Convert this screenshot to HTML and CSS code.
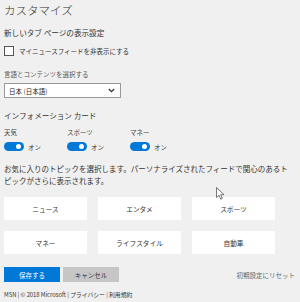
FILE: index.html
```html
<!DOCTYPE html>
<html lang="ja">
<head>
  <meta charset="UTF-8">
  <meta name="viewport" content="width=device-width, initial-scale=1.0">
  <title>カスタマイズ</title>
  <link rel="stylesheet" href="styles.css">
</head>
<body>
  <h1>カスタマイズ</h1>

  <h2 class="section-title">新しいタブ ページの表示設定</h2>
  <label class="check-row">
    <span class="checkbox"></span>
    <span>マイニュースフィードを非表示にする</span>
  </label>

  <div class="field-label">言語とコンテンツを選択する</div>
  <div class="select">
    <span>日本 (日本語)</span>
    <svg class="chevron" width="7" height="5" viewBox="0 0 7 5">
      <path d="M0.8 1 L3.5 3.6 L6.2 1" fill="none" stroke="#333" stroke-width="1.3"/>
    </svg>
  </div>

  <h2 class="section-title info-title">インフォメーション カード</h2>
  <div class="cards">
    <div class="card">
      <div class="card-name">天気</div>
      <div class="toggle-row"><span class="toggle"></span><span>オン</span></div>
    </div>
    <div class="card">
      <div class="card-name">スポーツ</div>
      <div class="toggle-row"><span class="toggle"></span><span>オン</span></div>
    </div>
    <div class="card">
      <div class="card-name">マネー</div>
      <div class="toggle-row"><span class="toggle"></span><span>オン</span></div>
    </div>
  </div>

  <p class="intro">お気に入りのトピックを選択します。パーソナライズされたフィードで関心のあるト<br>ピックがさらに表示されます。</p>

  <div class="topics">
    <button class="topic">ニュース</button>
    <button class="topic">エンタメ</button>
    <button class="topic">スポーツ</button>
    <button class="topic">マネー</button>
    <button class="topic">ライフスタイル</button>
    <button class="topic">自動車</button>
  </div>

  <div class="actions">
    <button class="btn btn-save">保存する</button>
    <button class="btn btn-cancel">キャンセル</button>
    <a class="reset" href="#">初期設定にリセット</a>
  </div>

  <div class="footer">MSN | © 2018 Microsoft | プライバシー | 利用規約</div>

  <!-- mouse pointer in the screenshot -->
  <svg class="cursor" width="9" height="13" viewBox="0 0 9 13">
    <path d="M0.5 0.5 L0.5 10.5 L3 8.3 L4.8 12.2 L6.3 11.5 L4.6 7.7 L8 7.7 Z" fill="#fff" stroke="#555" stroke-width="0.8"/>
  </svg>
</body>
</html>
```

FILE: styles.css
```css
body {
  margin: 0;
  padding: 0 4px;
  background-color: #f0f0f0;
  color: #333;
  font-family: "Noto Sans CJK JP", "Noto Sans", sans-serif;
  position: relative;
  height: 302px;
  overflow: hidden;
}
h1 {
  margin: 3px 0 0;
  font-size: 11.5px;
  line-height: 14px;
  font-weight: 300;
  color: #333;
}
.section-title {
  margin: 11px 0 0;
  font-size: 7.6px;
  line-height: 10px;
  font-weight: normal;
  color: #333;
}
.check-row {
  display: flex;
  align-items: center;
  gap: 5px;
  margin-top: 8px;
  height: 10px;
  font-size: 6.5px;
  color: #333;
}
.checkbox {
  width: 8px;
  height: 8px;
  border: 1px solid #555;
  background: #fff;
}
.field-label {
  margin-top: 14px;
  font-size: 6.5px;
  line-height: 9px;
  color: #555;
}
.select {
  margin-top: 4px;
  width: 117px;
  height: 15px;
  box-sizing: border-box;
  border: 1px solid #999;
  background: #fff;
  display: flex;
  align-items: center;
  justify-content: space-between;
  padding: 0 5px 0 4px;
  font-size: 6.5px;
  color: #222;
}
.info-title {
  margin-top: 13px;
}
.cards {
  display: flex;
  margin-top: 7px;
}
.card {
  width: 63px;
}
.card-name {
  font-size: 6.5px;
  line-height: 9px;
  color: #444;
}
.toggle-row {
  display: flex;
  align-items: center;
  gap: 4px;
  margin-top: 5px;
  height: 9px;
  font-size: 6.5px;
  color: #333;
}
.toggle {
  width: 20px;
  height: 9px;
  border-radius: 5px;
  background: #0078d7;
  position: relative;
}
.toggle::after {
  content: "";
  position: absolute;
  right: 3px;
  top: 2px;
  width: 5px;
  height: 5px;
  border-radius: 50%;
  background: #fff;
}
.intro {
  margin: 12px -4px 0 0;
  font-size: 7.5px;
  line-height: 12px;
  color: #333;
  white-space: nowrap;
}
.topics {
  display: grid;
  grid-template-columns: repeat(3, 83px);
  grid-auto-rows: 23px;
  gap: 11px;
  margin-top: 10px;
}
.topic {
  background: #fff;
  border: none;
  padding: 0;
  font-family: inherit;
  font-size: 6.7px;
  color: #333;
}
.actions {
  display: flex;
  align-items: center;
  gap: 3px;
  margin-top: 13px;
}
.btn {
  width: 56px;
  height: 15px;
  border: none;
  padding: 0;
  font-family: inherit;
  font-size: 6.5px;
}
.btn-save {
  background: #0078d7;
  color: #fff;
}
.btn-cancel {
  background: #c6c6c6;
  color: #333;
}
.reset {
  margin-left: auto;
  margin-right: 1px;
  font-size: 6.5px;
  color: #666;
  text-decoration: none;
}
.footer {
  margin-top: 9px;
  font-size: 5.8px;
  line-height: 8px;
  color: #333;
}
.cursor {
  position: absolute;
  left: 216px;
  top: 187px;
}
```
